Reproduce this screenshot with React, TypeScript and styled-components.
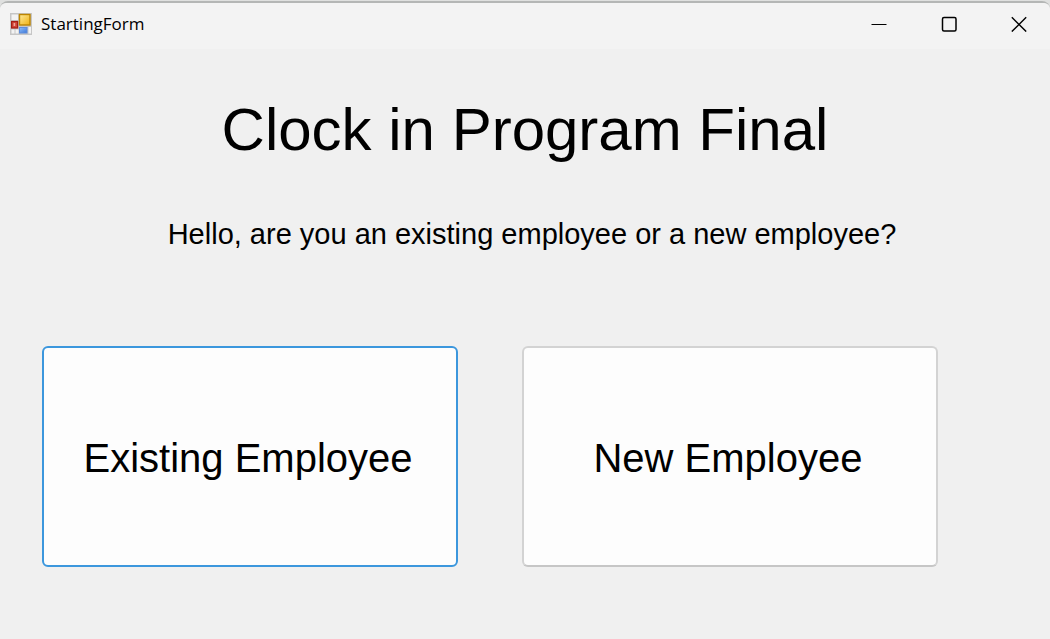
import React from 'react';
import styled, { createGlobalStyle } from 'styled-components';

const GlobalStyle = createGlobalStyle`
  * { box-sizing: border-box; }
  html, body, #root { height: 100%; }
  body { margin: 0; background: #dfe0df; }
`;

const Desktop = styled.div`
  display: flex;
  min-height: 100%;
  padding-top: 1px;
`;

const Window = styled.div`
  flex: 1;
  display: flex;
  flex-direction: column;
  background: #f0f0f0;
  border-top: 2px solid #b4b6b5;
  border-radius: 8px 8px 0 0;
  color: #000;
  font-family: "Liberation Sans", Arial, sans-serif;
`;

const TitleBar = styled.header`
  display: flex;
  align-items: center;
  height: 46px;
  padding: 0 0 4px 10px;
  background: #f3f3f3;
  border-radius: 6px 6px 0 0;
`;

const Caption = styled.span`
  flex: 1;
  margin-left: 9px;
  font: 17px/24px "Open Sans", "Noto Sans", sans-serif;
`;

const CaptionButtons = styled.div`
  display: flex;
  margin-right: -4px;
`;

const CaptionButton = styled.button`
  display: grid;
  place-items: center;
  width: 70px;
  height: 40px;
  padding: 0;
  border: 0;
  background: transparent;
`;

const Content = styled.main`
  display: flex;
  flex-direction: column;
  padding: 45px 42px;
`;

const Heading = styled.h1`
  margin: 0;
  font-size: 60px;
  line-height: 72px;
  font-weight: 400;
  text-align: center;
`;

const Question = styled.p`
  margin: 50px 0 94px;
  padding-left: 14px;
  font-size: 29px;
  line-height: 36px;
  text-align: center;
`;

const Choices = styled.div`
  display: grid;
  grid-template-columns: 1fr 1fr;
  gap: 64px;
  padding-right: 70px;
`;

const ChoiceButton = styled.button<{ $focused?: boolean }>`
  height: 221px;
  padding: 4px 4px 0 0;
  border: 2px solid ${p => (p.$focused ? '#3c97dd' : '#d3d3d3')};
  border-bottom-color: ${p => (p.$focused ? '#3c97dd' : '#c6c6c6')};
  border-radius: 6px;
  background: #fdfdfd;
  color: #000;
  font-family: inherit;
  font-size: 40px;
`;

const FormIcon = () => (
  <svg width="22" height="22" viewBox="0 0 22 22" aria-hidden="true">
    <defs>
      <linearGradient id="gold" x1="0" y1="0" x2="1" y2="1">
        <stop offset="0" stopColor="#ffeb9a" />
        <stop offset="1" stopColor="#eeb010" />
      </linearGradient>
      <linearGradient id="blue" x1="0" y1="0" x2="1" y2="1">
        <stop offset="0" stopColor="#8dbcfa" />
        <stop offset="1" stopColor="#3d78d8" />
      </linearGradient>
    </defs>
    <rect width="22" height="22" fill="#c6c6c6" />
    <rect x="1.5" y="1.5" width="6.5" height="5.5" fill="#f3f3f3" />
    <rect x="1.5" y="16.5" width="3" height="4" fill="#f3f3f3" />
    <rect x="5.5" y="16.5" width="3" height="4" fill="#f3f3f3" />
    <rect x="18.5" y="14" width="2.5" height="6.5" fill="#f3f3f3" />
    <rect x="9.5" y="1.5" width="10.5" height="10.5" fill="url(#gold)" stroke="#bd8500" strokeWidth="1.4" />
    <rect x="1.6" y="8.5" width="6" height="6.5" fill="#cf4436" stroke="#a31d14" strokeWidth="1.2" />
    <rect x="3.6" y="10" width="1.6" height="3" fill="#f0a59c" />
    <rect x="9.5" y="14.5" width="7.5" height="5.5" fill="url(#blue)" stroke="#5e8ddc" />
  </svg>
);

export default function App() {
  return (
    <>
      <GlobalStyle />
      <Desktop>
        <Window>
          <TitleBar>
            <FormIcon />
            <Caption>StartingForm</Caption>
            <CaptionButtons>
              <CaptionButton aria-label="Minimize">
                <svg width="16" height="16" viewBox="0 0 16 16"><path d="M.5 8.5h15" stroke="#000" /></svg>
              </CaptionButton>
              <CaptionButton aria-label="Maximize">
                <svg width="16" height="16" viewBox="0 0 16 16"><rect x="1.5" y="1.5" width="13.5" height="13.5" rx="1.5" fill="none" stroke="#000" strokeWidth="1.5" /></svg>
              </CaptionButton>
              <CaptionButton aria-label="Close">
                <svg width="16" height="16" viewBox="0 0 16 16"><path d="M.8 1.2l14.4 14.4M15.2 1.2L.8 15.6" stroke="#000" strokeWidth="1.4" /></svg>
              </CaptionButton>
            </CaptionButtons>
          </TitleBar>
          <Content>
            <Heading>Clock in Program Final</Heading>
            <Question>Hello, are you an existing employee or a new employee?</Question>
            <Choices>
              <ChoiceButton $focused>Existing Employee</ChoiceButton>
              <ChoiceButton>New Employee</ChoiceButton>
            </Choices>
          </Content>
        </Window>
      </Desktop>
    </>
  );
}
